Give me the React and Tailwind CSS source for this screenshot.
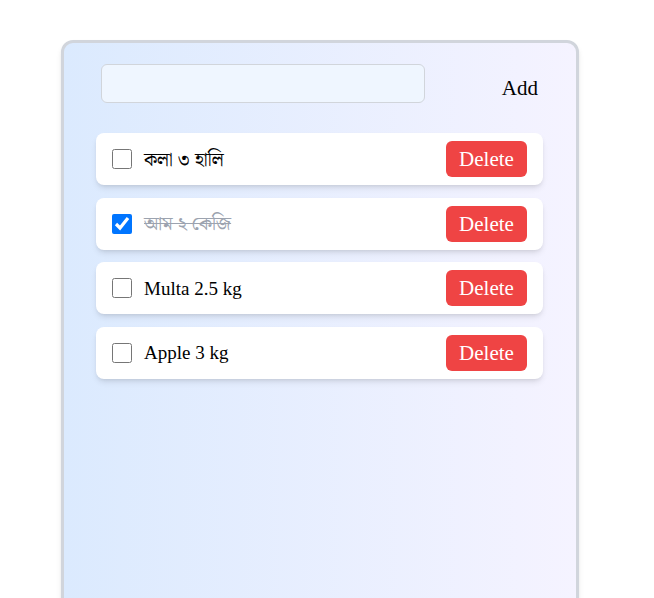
import { useState } from 'react';

const initial = [
  { id: 1, text: 'কলা ৩ হালি', done: false },
  { id: 2, text: 'আম ২ কেজি', done: true },
  { id: 3, text: 'Multa 2.5 kg', done: false },
  { id: 4, text: 'Apple 3 kg', done: false },
];

export default function App() {
  const [items, setItems] = useState(initial);
  const [text, setText] = useState('');

  const addItem = (e) => {
    e.preventDefault();
    if (!text.trim()) return;
    setItems([...items, { id: Date.now(), text, done: false }]);
    setText('');
  };

  const toggle = (id) =>
    setItems(items.map((it) => (it.id === id ? { ...it, done: !it.done } : it)));

  const remove = (id) => setItems(items.filter((it) => it.id !== id));

  return (
    <div
      className="h-[598px] bg-white pt-10 pl-[61px] overflow-hidden"
      style={{ fontFamily: '"Liberation Serif", "Noto Serif Bengali", "Noto Sans Bengali", serif' }}
    >
      <div className="w-[518px] h-[570px] rounded-xl border-[3px] border-gray-300 bg-gradient-to-r from-[#dbeafe] to-[#f5f3ff] shadow-md pt-[21px]">
        <form onSubmit={addItem} className="flex items-center pl-[37px] pr-[38px]">
          <input
            className="w-[324px] h-[39px] rounded-md border border-[#d1d5db] bg-[#eff6ff] px-3 text-lg outline-none"
            value={text}
            onChange={(e) => setText(e.target.value)}
          />
          <button type="submit" className="ml-auto mt-[9px] text-[21px] text-black leading-none">
            Add
          </button>
        </form>

        <ul className="mt-[30px] pl-8 pr-[33px] flex flex-col gap-[12.5px]">
          {items.map((it) => (
            <li
              key={it.id}
              className="h-[52px] flex items-center bg-white rounded-lg shadow-md pl-4 pr-4"
            >
              <input
                type="checkbox"
                checked={it.done}
                onChange={() => toggle(it.id)}
                className="w-5 h-5"
              />
              <span
                className={
                  'ml-3 mt-[2px] text-[19px] ' +
                  (it.done ? 'line-through text-[#9ca3af]' : 'text-black')
                }
              >
                {it.text}
              </span>
              <button
                onClick={() => remove(it.id)}
                className="ml-auto h-9 w-[81px] rounded-md bg-[#ef4444] text-white text-[21px] pt-[2px]"
              >
                Delete
              </button>
            </li>
          ))}
        </ul>
      </div>
    </div>
  );
}
